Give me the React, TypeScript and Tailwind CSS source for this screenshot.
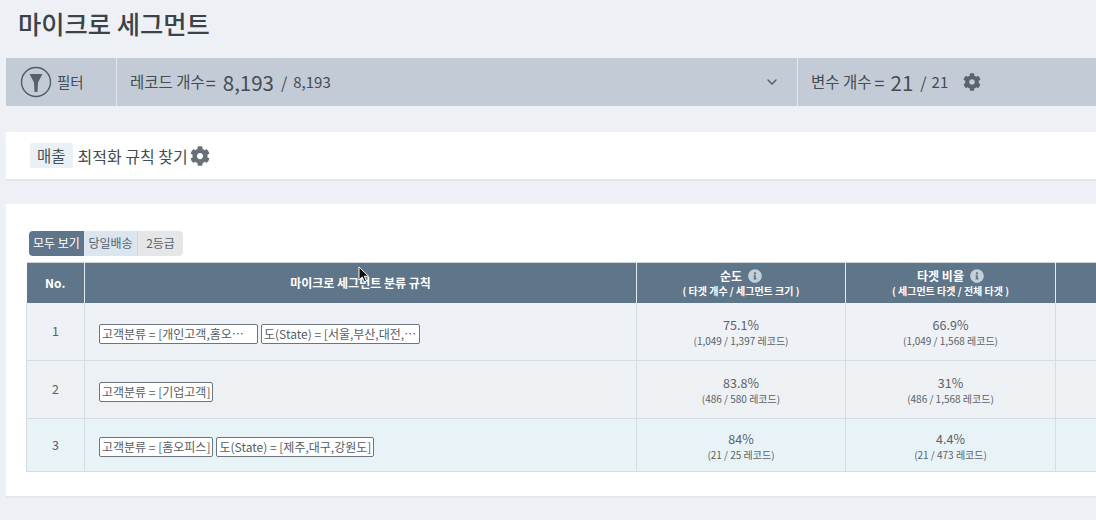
import { FaCog, FaInfoCircle } from "react-icons/fa";
import { LuChevronDown } from "react-icons/lu";

const rows = [
  {
    no: 1,
    rules: ["고객분류 = [개인고객,홈오…", "도(State) = [서울,부산,대전,…"],
    purity: "75.1%",
    puritySub: "(1,049 / 1,397 레코드)",
    ratio: "66.9%",
    ratioSub: "(1,049 / 1,568 레코드)",
    height: "h-[58px]",
    bg: "bg-[#eef1f5]",
  },
  {
    no: 2,
    rules: ["고객분류 = [기업고객]"],
    purity: "83.8%",
    puritySub: "(486 / 580 레코드)",
    ratio: "31%",
    ratioSub: "(486 / 1,568 레코드)",
    height: "h-[58px]",
    bg: "bg-[#eef1f4]",
  },
  {
    no: 3,
    rules: ["고객분류 = [홈오피스]", "도(State) = [제주,대구,강원도]"],
    purity: "84%",
    puritySub: "(21 / 25 레코드)",
    ratio: "4.4%",
    ratioSub: "(21 / 473 레코드)",
    height: "h-[53px]",
    bg: "bg-[#e8f3f8]",
  },
];

function FilterIcon() {
  return (
    <svg width="32" height="32" viewBox="0 0 32 32" fill="none">
      <circle cx="16" cy="16" r="14.5" stroke="#4f5b66" strokeWidth="1.4" />
      <path d="M9.500 8h13l-4.500 8.500L17.500 26h-3L14 16.500z" fill="#55616d" />
    </svg>
  );
}

function RuleTag({ text, long }: { text: string; long: boolean }) {
  return (
    <span
      className={`mr-[3px] inline-block h-[20px] whitespace-nowrap rounded-[2px] border border-[#6b7680] bg-white px-[2px] align-middle text-[12px] leading-[18px] text-[#555c63] ${
        long ? "w-[159px]" : ""
      }`}
    >
      {text}
    </span>
  );
}

export default function App() {
  return (
    <div className="relative h-[520px] w-[1096px] overflow-hidden bg-[#edf0f4] font-['Noto_Sans_CJK_KR','Noto_Sans',sans-serif] text-[#454c53]">
      <h1 className="pl-[18px] pt-[5px] text-[25.300px] font-medium leading-[37px] text-[#3b4249]">마이크로 세그먼트</h1>

      <div className="ml-[6px] mt-[16px] flex h-[48px] items-center bg-[#c3cbd7]">
        <div className="flex h-full w-[111px] items-center gap-[5px] border-r border-[#e3e7ec] pl-[14px] text-[14.500px]">
          <FilterIcon />
          <span className="text-[#454c53]">필터</span>
        </div>
        <div className="flex h-full w-[681px] items-center border-r border-[#e3e7ec] pl-[13px] pr-[17px]">
          <span className="text-[15.500px]">레코드 개수</span>
          <span className="ml-[1px] text-[18px] leading-none">=</span>
          <span className="ml-[7px] text-[20.500px] leading-none">8,193</span>
          <span className="ml-[7px] text-[16px]">/</span>
          <span className="ml-[6px] text-[15px]">8,193</span>
          <LuChevronDown className="ml-auto text-[#505a64]" size={16} />
        </div>
        <div className="flex h-full items-center pl-[13px]">
          <span className="text-[15.500px]">변수 개수</span>
          <span className="ml-[3px] text-[18px] leading-none">=</span>
          <span className="ml-[6px] text-[20.500px] leading-none">21</span>
          <span className="ml-[7px] text-[16px]">/</span>
          <span className="ml-[5px] text-[15px]">21</span>
          <FaCog className="ml-[15px] text-[#59646f]" size={18} />
        </div>
      </div>

      <div className="ml-[6px] mt-[26px] flex h-[49px] items-center border-b-2 border-[#e4e7ea] bg-white pl-[24px] text-[16px]">
        <span className="rounded-[2px] bg-[#e9f1f6] px-[7px] text-[15.500px] leading-[25px] text-[#4a5259]">매출</span>
        <span className="ml-[5px]">최적화 규칙 찾기</span>
        <FaCog className="ml-[2px] text-[#686f76]" size={20} />
      </div>

      <div className="ml-[6px] mt-[23px] h-[294px] border-b-2 border-[#e4e7ea] bg-white pl-[20px] pt-[27px]">
        <div className="ml-[3px] flex h-[25px] w-[154px] overflow-hidden rounded-[4px] text-[12px] leading-[24px]">
          <span className="w-[55px] bg-[#5f7589] text-center text-white">모두 보기</span>
          <span className="w-[54px] border-r border-[#cfd6dc] bg-[#dae5ee] text-center text-[#56606a]">당일배송</span>
          <span className="flex-1 bg-[#e4e6e8] text-center text-[#5d6267]">2등급</span>
        </div>

        <table className="mt-[6px] w-[1240px] table-fixed border-collapse text-center">
          <thead>
            <tr className="h-[40px] border-t border-[#cfd5da] bg-[#5f7589] text-[11px] font-bold text-white">
              <th className="w-[58px] border-r border-[#e6ebef] text-[12px]">No.</th>
              <th className="w-[552px] border-r border-[#e6ebef] text-[12px]">마이크로 세그먼트 분류 규칙</th>
              <th className="w-[209px] border-r border-[#e6ebef] leading-[13px]">
                <div className="flex items-center justify-center gap-[6px] text-[12px] leading-[16px]">
                  순도 <FaInfoCircle className="text-[#c3d0da]" size={14} />
                </div>
                <div className="text-[10px]">( 타겟 개수 / 세그먼트 크기 )</div>
              </th>
              <th className="w-[210px] border-r border-[#e6ebef] leading-[13px]">
                <div className="flex items-center justify-center gap-[6px] text-[12px] leading-[16px]">
                  타겟 비율 <FaInfoCircle className="text-[#c3d0da]" size={14} />
                </div>
                <div className="text-[10px]">( 세그먼트 타겟 / 전체 타겟 )</div>
              </th>
              <th />
            </tr>
          </thead>
          <tbody>
            {rows.map((row) => (
              <tr key={row.no} className={`${row.height} ${row.bg} border-b border-[#d7dce0]`}>
                <td className="border-x border-[#d7dce0] text-[12.500px] text-[#5a6168]">{row.no}</td>
                <td className="border-r border-[#d7dce0] pl-[14px] text-left">
                  {row.rules.map((rule) => (
                    <RuleTag key={rule} text={rule} long={row.no === 1} />
                  ))}
                </td>
                <td className="border-r border-[#d7dce0] text-[#5a6168]">
                  <div className="pt-[1px] text-[12.500px] leading-[18px]">{row.purity}</div>
                  <div className="text-[10px] leading-[14px]">{row.puritySub}</div>
                </td>
                <td className="border-r border-[#d7dce0] text-[#5a6168]">
                  <div className="pt-[1px] text-[12.500px] leading-[18px]">{row.ratio}</div>
                  <div className="text-[10px] leading-[14px]">{row.ratioSub}</div>
                </td>
                <td />
              </tr>
            ))}
          </tbody>
        </table>
      </div>

      {/* mouse pointer caught in the capture */}
      <svg className="absolute left-[358px] top-[266px]" width="12" height="18" viewBox="0 0 12 18">
        <path d="M1 1v13l3.200-3 2.300 5 2-1-2.200-4.800H10.500z" fill="#111" stroke="#fff" strokeWidth="1" />
      </svg>
    </div>
  );
}
